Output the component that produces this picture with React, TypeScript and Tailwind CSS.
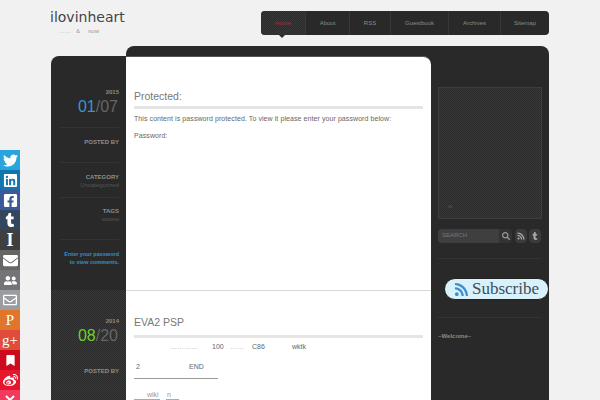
import { FaBookmark, FaEnvelope, FaFacebookSquare, FaLinkedin, FaRss, FaSearch, FaTumblr, FaTwitter, FaUserFriends, FaWeibo, FaRegEnvelope } from "react-icons/fa";

const hatch = "bg-[conic-gradient(#2b2b2b_25%,#383838_0_50%,#2b2b2b_0_75%,#383838_0)] bg-[length:2px_2px]";

const navItems = [
  { label: "Home", w: "w-[44px]", active: true },
  { label: "About", w: "w-[44px]" },
  { label: "RSS", w: "w-[41px]" },
  { label: "Guestbook", w: "w-[58px]" },
  { label: "Archives", w: "w-[52px]" },
  { label: "Sitemap", w: "w-[49px]" },
];

function Divider() {
  return <div className="h-px bg-[#333333]" />;
}

function SocialBar() {
  const cls = "flex h-5 w-5 items-center justify-center text-white";
  return (
    <div className="absolute left-0 top-[150px] z-10 flex w-5 flex-col">
      <div className={`${cls} bg-[#2aa4dc] text-[15px]`}><FaTwitter /></div>
      <div className={`${cls} bg-[#0f76ae] text-[15px]`}><FaLinkedin /></div>
      <div className={`${cls} bg-[#3b5998] text-[15px]`}><FaFacebookSquare /></div>
      <div className={`${cls} bg-[#34465d] text-[14px]`}><FaTumblr /></div>
      <div className={`${cls} bg-[#3f3f3f] font-['Liberation_Serif',serif] text-[18px] font-bold leading-none`}>I</div>
      <div className={`${cls} bg-[#666666] text-[15px]`}><FaEnvelope /></div>
      <div className={`${cls} bg-[#737378] text-[13px]`}><FaUserFriends /></div>
      <div className={`${cls} bg-[#9a9ca0] text-[14px]`}><FaRegEnvelope /></div>
      <div className={`${cls} bg-[#e0762c] font-['Liberation_Serif',serif] text-[15px] leading-none`}>P</div>
      <div className={`${cls} bg-[#e04b3a] font-['Liberation_Serif',serif] text-[15px] leading-none`}>g+</div>
      <div className={`${cls} bg-[#cc0a1e] text-[11px]`}><FaBookmark /></div>
      <div className={`${cls} bg-[#e6162d] text-[15px]`}><FaWeibo /></div>
      <div className={`${cls} bg-[#f03a5f]`}>
        <svg width="12" height="12" viewBox="0 0 12 12" fill="none" stroke="white" strokeWidth="2"><path d="M2 2l4 4 4-4" /></svg>
      </div>
    </div>
  );
}

function Meta({ title, sub }: { title: string; sub?: string }) {
  return (
    <div className="text-right">
      <div className="text-[6px] font-bold leading-[8px] text-[#8f8f8f]">{title}</div>
      {sub && <div className="text-[6px] leading-[8px] text-[#555555]">{sub}</div>}
    </div>
  );
}

function DateBlock({ year, month, day, color }: { year: string; month: string; day: string; color: string }) {
  return (
    <div className="text-right">
      <div className="text-[6px] font-bold leading-[8px] text-[#8a8a8a]">{year}</div>
      <div className="mr-px mt-[2px] text-[16px] leading-[18px] text-[#666666]">
        <span className={color}>{month}</span>/{day}
      </div>
    </div>
  );
}

export default function App() {
  return (
    <div className="relative h-[400px] w-[600px] overflow-hidden bg-[#f1f1f1] font-['Liberation_Sans',Arial,sans-serif]">
      <SocialBar />
      <div className="ml-[51px] w-[498px]">
        {/* Header */}
        <div className="flex h-[46px] items-start justify-between">
          <div className="pt-[8px]">
            <div className="-ml-px font-['DejaVu_Sans',sans-serif] text-[14px] leading-[18px] text-[#444444]">ilovinheart</div>
            <div className="mt-[1px] flex pl-[8px] text-[6px] leading-[8px] text-[#999999]">
              <span className="w-[15px]">……</span>
              <span className="w-[14px] pl-[2px]">&amp;</span>
              <span>now</span>
            </div>
          </div>
          <nav className="relative mt-[11px] flex h-[24px] w-[288px] rounded bg-[#292929] text-[6px] leading-[24px] text-[#8a8a8a]">
            {navItems.map((item, i) => (
              <div
                key={item.label}
                className={`${item.w} text-center ${i > 0 ? "border-l border-[#383838]" : ""} ${item.active ? `${hatch} rounded-l text-[#b8243a]` : ""}`}
              >
                {item.label}
              </div>
            ))}
            <div className="absolute left-[18px] top-[24px] h-0 w-0 border-x-[3px] border-t-[3px] border-x-transparent border-t-[#292929]" />
          </nav>
        </div>

        {/* Body */}
        <div className="flex items-start">
          {/* Date column */}
          <div className="mt-[10px] w-[75px] shrink-0 rounded-tl-lg bg-[#292929]">
            <div className="h-[234px] pl-[9px] pr-[7px] pt-[32px]">
              <DateBlock year="2015" month="01" day="07" color="text-[#3d94cc]" />
              <div className="mt-[11px]"><Divider /></div>
              <div className="pb-[16px] pt-[10px]"><Meta title="POSTED BY" /></div>
              <Divider />
              <div className="pb-[8px] pt-[10px]"><Meta title="CATEGORY" sub="Uncategorized" /></div>
              <Divider />
              <div className="pb-[16px] pt-[9px]"><Meta title="TAGS" sub="wwww" /></div>
              <Divider />
              <div className="whitespace-nowrap pt-[10px] text-right text-[5.5px] font-bold leading-[8px] text-[#3a8fc4]">
                Enter your password
                <br />
                to view comments.
              </div>
            </div>
            <div className={`h-[110px] pl-[9px] pr-[7px] pt-[27px] ${hatch}`}>
              <DateBlock year="2014" month="08" day="20" color="text-[#6fcf30]" />
              <div className="mt-[11px]"><Divider /></div>
              <div className="pb-[16px] pt-[10px]"><Meta title="POSTED BY" /></div>
              <Divider />
            </div>
          </div>

          {/* Content + sidebar */}
          <div className="flex h-[354px] w-[423px] rounded-t-lg bg-[#292929] pt-[10px]">
            <main className="w-[305px] shrink-0 rounded-tr-lg border-t border-[#555555] bg-white px-[8px] text-[#666666]">
              <div className="h-[233px] pt-[31px]">
                <h2 className="text-[10.5px] leading-[16px] text-[#777777]">Protected:</h2>
                <div className="mt-[2px] h-[3px] bg-[#e5e5e5]" />
                <p className="mt-[5px] whitespace-nowrap text-[7px] leading-[10px] tracking-[0.08px]">This content is password protected. To view it please enter your password below:</p>
                <p className="mt-[7px] text-[7px] leading-[10px] tracking-[0.08px]">Password:</p>
              </div>
              <div className="-mx-[8px] h-px bg-[#d8d8d8]" />
              <div className="pt-[24px]">
                <h2 className="text-[10.5px] leading-[14px] text-[#777777]">EVA2 PSP</h2>
                <div className="mt-[6px] h-[3px] bg-[#e5e5e5]" />
                <div className="mt-[4px] flex text-[7px] leading-[10px]">
                  <span className="ml-[36px] w-[42px] text-[#aaaaaa]">…………</span>
                  <span className="w-[18px]">100</span>
                  <span className="w-[22px] text-[#aaaaaa]">……</span>
                  <span className="w-[40px]">C86</span>
                  <span>wktk</span>
                </div>
                <div className="mt-[10px] flex text-[7px] leading-[10px]">
                  <span className="ml-[2px] w-[53px]">2</span>
                  <span>END</span>
                </div>
                <div className="mt-[6px] h-px w-[84px] bg-[#999999]" />
                <div className="mt-[11px] flex text-[7px] leading-[9px] text-[#999999]">
                  <span className="w-[26px] border-b border-[#aaaaaa] pl-[13px]">wiki</span>
                  <span className="ml-[6px] w-[13px] border-b border-[#aaaaaa] pl-[1px]">n</span>
                </div>
              </div>
            </main>

            <aside className="w-[118px] shrink-0 px-[7px] pt-[31px]">
              <div className={`relative h-[132px] w-[104px] border border-[#3d3d3d] ${hatch}`}>
                <span className="absolute bottom-[9px] left-[9px] text-[6px] leading-[6px] text-[#555555]">w</span>
              </div>
              <div className="mt-[9px] flex h-[15px] items-center">
                <div className="flex h-[14px] w-[61px] items-center rounded-l-sm bg-[#3f3f3f] pl-[4px] text-[6px] text-[#777777]">SEARCH</div>
                <div className="flex h-[14px] w-[13px] items-center justify-center rounded-r-sm bg-[#333333] text-[8px] text-[#999999]"><FaSearch /></div>
                <div className="ml-[3px] flex h-[14px] w-[12px] items-center justify-center rounded-sm bg-[#3a3a3a] text-[8px] text-[#aaaaaa]"><FaRss /></div>
                <div className="ml-[2px] flex h-[14px] w-[12px] items-center justify-center rounded-sm bg-[#3a3a3a] text-[8px] text-[#aaaaaa]"><FaTumblr /></div>
              </div>
              <div className="mt-[15px]"><Divider /></div>
              <div className="ml-[6px] mt-[19px] flex h-[22px] w-[105px] items-center rounded-full border border-[#222222] bg-[#d8f1fb] pl-[9px]">
                <FaRss className="shrink-0 text-[15px] text-[#3d8fd0]" />
                <span className="ml-[3px] font-['Liberation_Serif',serif] text-[17px] leading-[18px] text-[#3a4f5a]">Subscribe</span>
              </div>
              <div className="mt-[17px]"><Divider /></div>
              <div className="mt-[14px] text-[6px] font-bold leading-[8px] text-[#8a8a8a]">~Welcome~</div>
            </aside>
          </div>
        </div>
      </div>
    </div>
  );
}
